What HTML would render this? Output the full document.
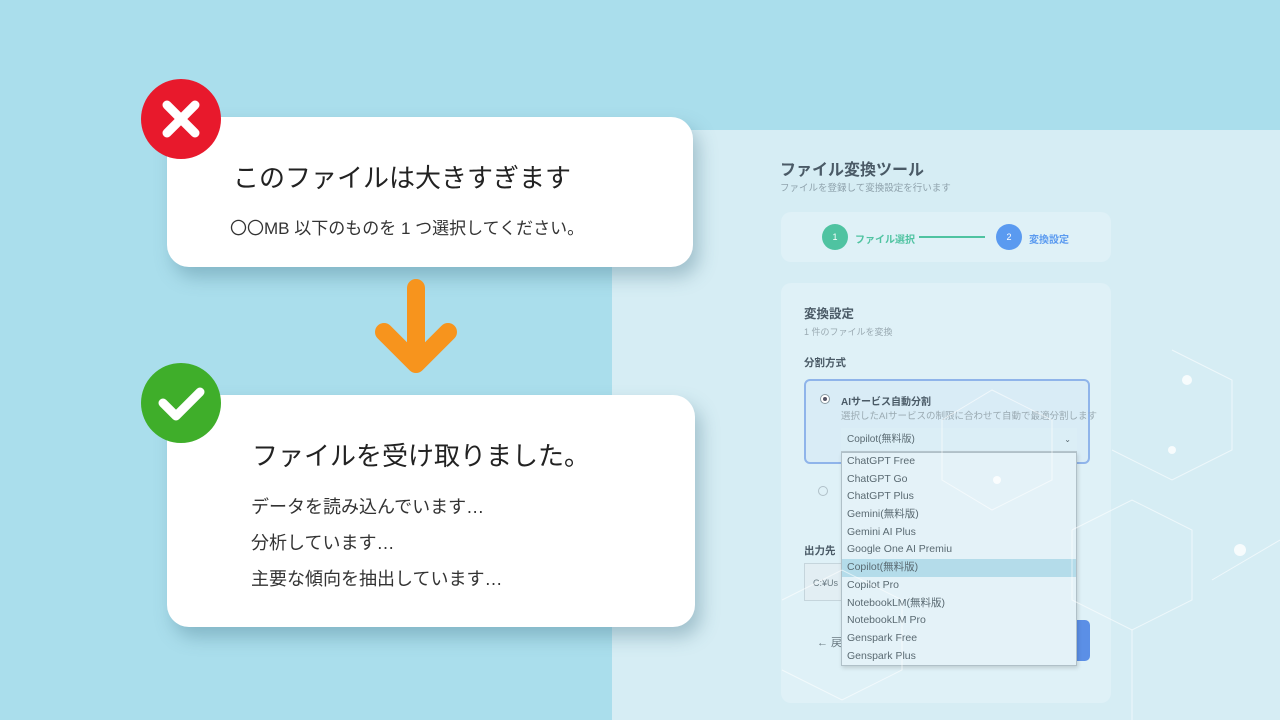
<!DOCTYPE html>
<html><head><meta charset="utf-8"><style>
*{margin:0;padding:0;box-sizing:border-box}
body{width:1280px;height:720px;overflow:hidden;background:#aadeec;position:relative;font-family:"Liberation Sans","Noto Sans CJK JP",sans-serif}
.abs{position:absolute}
.panel{left:612px;top:130px;width:668px;height:590px;background:#d6edf4}
.card{background:#fff;border-radius:22px;box-shadow:6px 10px 18px rgba(60,110,130,.35)}
.inner{background:#dff1f7;border-radius:10px}
.t{color:#222}
.dd div{height:17.7px;line-height:17.7px;padding-left:5px;font-size:10.5px;color:#5a6a72}
</style></head><body>
<div class="abs panel"></div>
<div class="abs" style="left:780px;top:156px;font-size:16px;color:#4a5a66;font-weight:bold">ファイル変換ツール</div>
<div class="abs" style="left:780px;top:180px;font-size:9.5px;color:#8fa2ac">ファイルを登録して変換設定を行います</div>
<div class="abs inner" style="left:781px;top:212px;width:330px;height:50px"></div>
<div class="abs" style="left:822px;top:224px;width:26px;height:26px;border-radius:50%;background:#4fc3a1;color:#fff;font-size:9px;text-align:center;line-height:26px">1</div>
<div class="abs" style="left:855px;top:231px;font-size:10px;color:#4fc3a1;font-weight:bold">ファイル選択</div>
<div class="abs" style="left:919px;top:236px;width:66px;height:2px;background:#4fc3a1"></div>
<div class="abs" style="left:996px;top:224px;width:26px;height:26px;border-radius:50%;background:#5a9af0;color:#fff;font-size:9px;text-align:center;line-height:26px">2</div>
<div class="abs" style="left:1029px;top:231px;font-size:10px;color:#5a9af0;font-weight:bold">変換設定</div>
<div class="abs inner" style="left:781px;top:283px;width:330px;height:420px"></div>
<div class="abs" style="left:804px;top:303px;font-size:12.5px;color:#4a5a66;font-weight:bold">変換設定</div>
<div class="abs" style="left:804px;top:325px;font-size:9px;color:#9aaab2">1 件のファイルを変換</div>
<div class="abs" style="left:804px;top:355px;font-size:10.5px;color:#4a5a66;font-weight:bold">分割方式</div>
<div class="abs" style="left:804px;top:379px;width:286px;height:85px;border:2px solid #8fb4ea;border-radius:6px;background:#d9ecf6"></div>
<div class="abs" style="left:820px;top:394px;width:10px;height:10px;border-radius:50%;border:1px solid #8a9aa2;background:#fff"><div style="margin:2px;width:4px;height:4px;border-radius:50%;background:#556"></div></div>
<div class="abs" style="left:841px;top:393px;font-size:10px;color:#4a5a66;font-weight:bold">AIサービス自動分割</div>
<div class="abs" style="left:841px;top:408px;font-size:9.5px;color:#9aaab2">選択したAIサービスの制限に合わせて自動で最適分割します</div>
<div class="abs" style="left:841px;top:428px;width:236px;height:24px;background:#dbeef6;border-bottom:1px solid #b8c8d0;font-size:10px;color:#5a6a72;line-height:24px;padding-left:6px">Copilot(無料版)<span style="position:absolute;right:6px;font-size:8px">⌄</span></div>
<div class="abs" style="left:818px;top:486px;width:10px;height:10px;border-radius:50%;border:1px solid #b0c0c8"></div>
<div class="abs" style="left:804px;top:543px;font-size:10.5px;color:#4a5a66;font-weight:bold">出力先</div>
<div class="abs" style="left:804px;top:563px;width:40px;height:38px;background:#e2eef3;border:1px solid #c5d5dc;font-size:9px;color:#6a7a82;line-height:38px;padding-left:8px">C:¥Us</div>
<div class="abs" style="left:817px;top:634px;font-size:11px;color:#6a7a82">← 戻</div>
<div class="abs" style="left:1070px;top:620px;width:20px;height:41px;background:#5b8fe6;border-radius:5px"></div>
<div class="abs dd" style="left:841px;top:452px;width:236px;height:214px;background:#e4f2f8;border:1px solid #b0c0c8;box-shadow:1px 2px 4px rgba(0,0,0,.15)">
<div>ChatGPT Free</div><div>ChatGPT Go</div><div>ChatGPT Plus</div><div>Gemini(無料版)</div><div>Gemini AI Plus</div><div>Google One AI Premiu</div><div style="background:#b4dcea">Copilot(無料版)</div><div>Copilot Pro</div><div>NotebookLM(無料版)</div><div>NotebookLM Pro</div><div>Genspark Free</div><div>Genspark Plus</div>
</div>
<svg class="abs" style="left:612px;top:330px" width="668" height="390"><g stroke="#fff" stroke-opacity=".6" fill="none" stroke-width="1">
<polyline points="330,90 380,60 440,90 440,150 380,180 330,150 330,90"/>
<polyline points="560,20 620,50 620,120 560,150 500,120"/>
<polyline points="460,200 520,170 580,200 580,270 520,300 460,270 460,200"/>
<polyline points="170,270 230,240 290,270 290,340 230,370 170,340"/>
<polyline points="520,300 520,390"/><polyline points="600,250 668,210"/></g>
<g fill="#fff" fill-opacity=".8"><circle cx="575" cy="50" r="5"/><circle cx="628" cy="220" r="6"/><circle cx="560" cy="120" r="4"/><circle cx="385" cy="150" r="4"/></g></svg>
<div class="abs card" style="left:167px;top:117px;width:526px;height:150px"></div>
<div class="abs t" style="left:233px;top:158px;font-size:26px">このファイルは大きすぎます</div>
<div class="abs t" style="left:230px;top:214px;font-size:17px;color:#333">〇〇MB 以下のものを 1 つ選択してください。</div>
<svg class="abs" style="left:141px;top:79px" width="80" height="80"><circle cx="40" cy="40" r="40" fill="#e8192c"/><path d="M26 26L54 54M54 26L26 54" stroke="#fff" stroke-width="9" stroke-linecap="round"/></svg>
<svg class="abs" style="left:366px;top:276px" width="100" height="104"><path d="M50 12V88M18 56L50 88L82 56" stroke="#f7941d" stroke-width="18" stroke-linecap="round" stroke-linejoin="round" fill="none"/></svg>
<div class="abs card" style="left:167px;top:395px;width:528px;height:232px"></div>
<div class="abs t" style="left:252px;top:436px;font-size:26px">ファイルを受け取りました。</div>
<div class="abs" style="left:251px;top:489px;font-size:18px;color:#333;line-height:36px">データを読み込んでいます…<br>分析しています…<br>主要な傾向を抽出しています…</div>
<svg class="abs" style="left:141px;top:363px" width="80" height="80"><circle cx="40" cy="40" r="40" fill="#3fae2a"/><path d="M22 40L35 53L59 29" stroke="#fff" stroke-width="9" stroke-linecap="round" stroke-linejoin="round" fill="none"/></svg>
</body></html>
